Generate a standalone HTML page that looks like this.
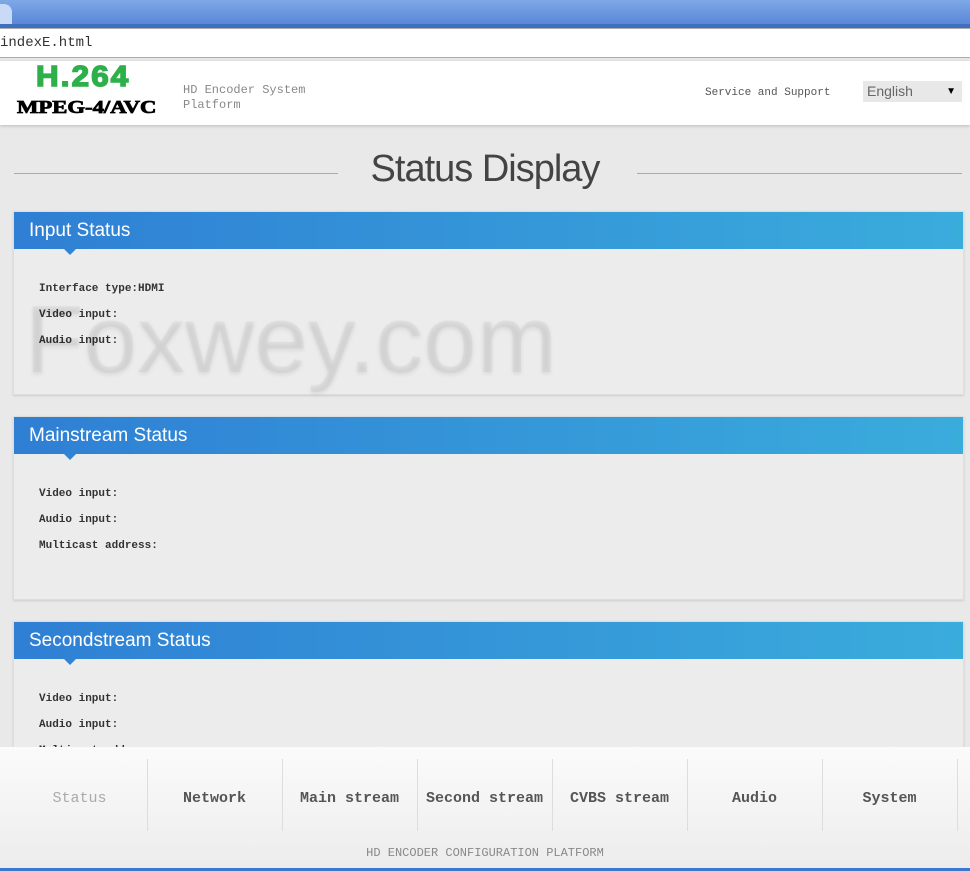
<!DOCTYPE html>
<html><head><style>
body{margin:0;width:970px;height:871px;overflow:hidden;background:#e9e9e9;font-family:"Liberation Mono",monospace;position:relative}
.top{position:absolute;left:0;top:0;width:970px;height:24px;background:linear-gradient(#7fa8e6,#5a88d8)}
.tab{position:absolute;left:-10px;top:4px;width:22px;height:20px;background:#c8daf5;border-radius:0 8px 0 0}
.tb{position:absolute;top:24px;left:0;width:970px;height:4px;background:#3f6fbf}
.addr{position:absolute;top:28px;left:0;width:970px;height:28px;background:#fff;border-bottom:1px solid #aaa;border-top:1px solid #aaa;font-size:14px;line-height:28px;color:#333}
.hdr{position:absolute;top:61px;left:0;width:970px;height:64px;background:#fff;box-shadow:0 1px 3px #bbb}
.h264{position:absolute;left:36px;top:0px;font:bold 29px "Liberation Sans",sans-serif;color:#2db04a;letter-spacing:2px;-webkit-text-stroke:1.5px #2db04a;transform:scaleX(1.08);transform-origin:left}
.mpeg{position:absolute;left:17px;top:36px;font:bold 18px "Liberation Serif",serif;color:#000;-webkit-text-stroke:.8px #000;transform:scaleX(1.26);transform-origin:left}
.sub{position:absolute;left:183px;top:22px;font-size:12px;color:#888;line-height:15px}
.svc{position:absolute;left:705px;top:26px;font-size:11px;color:#555}
.sel{position:absolute;left:863px;top:20px;width:99px;height:21px;background:#e8e8e8;font:14px "Liberation Sans",sans-serif;color:#666;line-height:21px;text-indent:4px}
.sel b{position:absolute;right:6px;top:0;font-size:10px;color:#000}
.line{position:absolute;top:173px;height:1px;background:#aaa}
.title{position:absolute;top:148px;left:0;width:970px;text-align:center;font:38px "Liberation Sans",sans-serif;color:#444;letter-spacing:-1px}
.panel{position:absolute;left:13px;width:949px;background:#ececec;border:1px solid #ddd;box-shadow:0 1px 2px #ccc}
.ph{height:37px;background:linear-gradient(90deg,#2f7fd4,#3aacdc);color:#fff;font:19px "Liberation Sans",sans-serif;line-height:38px;padding-left:15px;position:relative}
.ph:after{content:"";position:absolute;left:50px;bottom:-6px;border:6px solid transparent;border-bottom:0;border-top-color:#3183d4}
.row{font-size:11px;font-weight:bold;color:#333;margin-left:25px;height:26px;line-height:28px}
.wm{position:absolute;left:25px;top:285px;font:96px "Liberation Sans",sans-serif;color:rgba(0,0,0,.035);text-shadow:0 2px 4px rgba(0,0,0,.08)}
.foot{position:absolute;top:747px;left:0;width:970px;height:124px;background:linear-gradient(#fbfbfb,#ececec)}
.nav{position:absolute;top:12px;height:72px;width:135px;text-align:center;line-height:80px;font-size:15px;font-weight:bold;color:#555;border-right:1px solid #ddd}
.ft{position:absolute;top:99px;width:970px;text-align:center;font-size:12px;color:#888}
.bl{position:absolute;bottom:0;left:0;width:970px;height:3px;background:#3d78d0}
</style></head><body>
<div class="top"><div class="tab"></div></div><div class="tb"></div>
<div class="addr">indexE.html</div>
<div class="hdr"><div class="h264">H.264</div><div class="mpeg">MPEG-4/AVC</div>
<div class="sub">HD Encoder System<br>Platform</div><div class="svc">Service and Support</div>
<div class="sel">English<b>▼</b></div></div>
<div class="line" style="left:14px;width:324px"></div><div class="line" style="left:637px;width:325px"></div>
<div class="title">Status Display</div>
<div class="panel" style="top:211px;height:182px"><div class="ph">Input Status</div><div style="height:26px"></div>
<div class="row">Interface type:HDMI</div><div class="row">Video input:</div><div class="row">Audio input:</div></div>
<div class="panel" style="top:416px;height:182px"><div class="ph">Mainstream Status</div><div style="height:26px"></div>
<div class="row">Video input:</div><div class="row">Audio input:</div><div class="row">Multicast address:</div></div>
<div class="panel" style="top:621px;height:182px"><div class="ph">Secondstream Status</div><div style="height:26px"></div>
<div class="row">Video input:</div><div class="row">Audio input:</div><div class="row">Multicast address:</div></div>
<div class="wm">Foxwey.com</div>
<div class="foot">
<div class="nav" style="left:12px;color:#aaa;font-weight:normal">Status</div>
<div class="nav" style="left:147px">Network</div>
<div class="nav" style="left:282px">Main stream</div>
<div class="nav" style="left:417px">Second stream</div>
<div class="nav" style="left:552px">CVBS stream</div>
<div class="nav" style="left:687px">Audio</div>
<div class="nav" style="left:822px">System</div>
<div class="ft">HD ENCODER CONFIGURATION PLATFORM</div><div class="bl"></div></div>
</body></html>
